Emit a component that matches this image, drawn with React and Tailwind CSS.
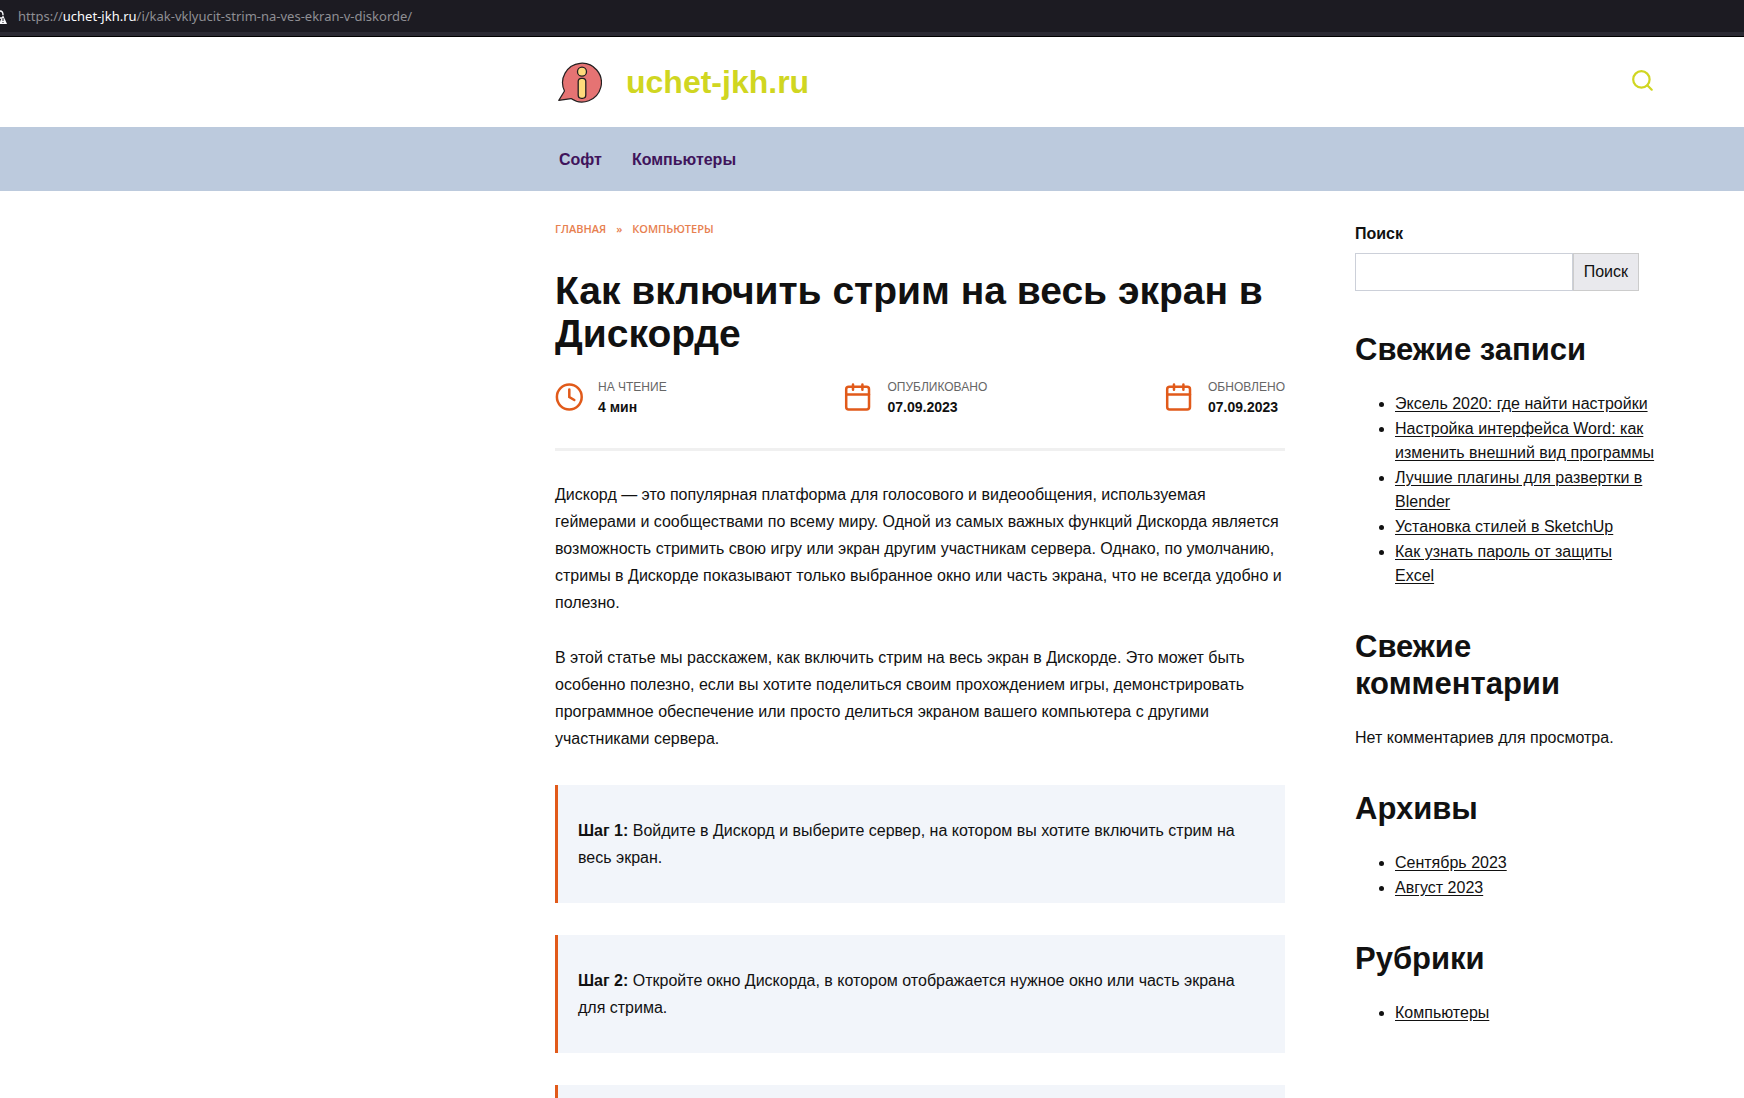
import { useState } from 'react';

const navLinks = ['Софт', 'Компьютеры'];

const recentPosts = [
  'Эксель 2020: где найти настройки',
  'Настройка интерфейса Word: как изменить внешний вид программы',
  'Лучшие плагины для развертки в Blender',
  'Установка стилей в SketchUp',
  'Как узнать пароль от защиты Excel',
];

const steps = [
  { title: 'Шаг 1:', text: 'Войдите в Дискорд и выберите сервер, на котором вы хотите включить стрим на весь экран.' },
  { title: 'Шаг 2:', text: 'Откройте окно Дискорда, в котором отображается нужное окно или часть экрана для стрима.' },
];

function Logo() {
  return (
    <svg viewBox="0 0 44 41" className="h-[41px] w-11" aria-hidden="true">
      <path
        d="M.8 38.4 6.5 29A19.4 19.4 0 1 1 13 36.6Z"
        fill="#e57373"
        stroke="#231f20"
        strokeWidth="1.2"
        strokeLinejoin="round"
      />
      <circle cx="24" cy="9.7" r="4.5" fill="#ffda7b" stroke="#231f20" strokeWidth="1.3" />
      <rect x="20.2" y="16.3" width="7.6" height="20" rx="3.2" fill="#ffda7b" stroke="#231f20" strokeWidth="1.3" />
    </svg>
  );
}

function ClockIcon() {
  return (
    <svg viewBox="0 0 28 28" className="size-7 shrink-0" fill="none" stroke="#e15a1a" strokeWidth="2.5" strokeLinecap="round" aria-hidden="true">
      <circle cx="14.3" cy="14" r="12.4" />
      <path d="M14.3 6.5V14l5 3" />
    </svg>
  );
}

function CalendarIcon() {
  return (
    <svg viewBox="0 0 28 28" className="size-7 shrink-0" fill="none" stroke="#e15a1a" strokeWidth="2.5" strokeLinecap="round" aria-hidden="true">
      <rect x="2.2" y="3.8" width="22.8" height="22.6" rx="2.5" />
      <path d="M2.2 11.5H25M9 1.6v5.2M18.4 1.6v5.2" />
    </svg>
  );
}

function MetaItem({ icon, label, value }) {
  return (
    <div className="flex items-center gap-[15px]">
      {icon}
      <div>
        <p className="text-xs leading-5 uppercase text-[#666]">{label}</p>
        <p className="text-sm leading-5 font-bold">{value}</p>
      </div>
    </div>
  );
}

function Widget({ title, children }) {
  return (
    <section className="mb-10">
      <h2 className="mb-6 text-[31px] leading-[37px] font-bold">{title}</h2>
      {children}
    </section>
  );
}

function LinkList({ items }) {
  return (
    <ul className="list-disc space-y-px pl-10 leading-6">
      {items.map(item => (
        <li key={item}>
          <a href="#" className="underline underline-offset-2">{item}</a>
        </li>
      ))}
    </ul>
  );
}

export default function App() {
  const [query, setQuery] = useState('');

  return (
    <div className="h-screen overflow-hidden bg-white font-['Liberation_Sans',Arial,sans-serif] text-base text-[#111]">
      {/* Address bar */}
      <div className="flex h-[37px] items-center border-b border-black bg-[#1c1b22] font-['Noto_Sans',sans-serif] text-[13px] text-[#8f8f94] shadow-[inset_0_-4px_0_#2b2a33]">
        <svg viewBox="0 0 8 16" className="mr-2.5 h-4 w-2" aria-hidden="true">
          <path d="M0 1c2 0 3 1 3 4M0 8h2" stroke="#fbfbfe" strokeWidth="1.4" fill="none" />
          <path d="M3 5 7 14H-1Z" fill="#fbfbfe" />
          <path d="M3 8v3M3 12v1" stroke="#1c1b22" strokeWidth="1" />
        </svg>
        <span className="pb-0.5">https://<span className="text-[#fbfbfe]">uchet-jkh.ru</span>/i/kak-vklyucit-strim-na-ves-ekran-v-diskorde/</span>
      </div>

      <header>
        <div className="mr-[89px] ml-auto flex h-[90px] max-w-[1100px] items-center justify-between pr-0.5 pl-[3px]">
          <a href="#" className="flex items-center gap-6">
            <Logo />
            <span className="text-[32px] leading-9 font-bold text-[#d0d621]">uchet-jkh.ru</span>
          </a>
          <button type="button" aria-label="Поиск по сайту" className="pb-1">
            <svg viewBox="0 0 21 21" className="size-[21px]" fill="none" stroke="#d0d621" strokeWidth="2.2" strokeLinecap="round" aria-hidden="true">
              <circle cx="9.4" cy="9.4" r="8.2" />
              <path d="m15.3 15.3 4.4 4.4" />
            </svg>
          </button>
        </div>
        <nav className="bg-[#bccadd]">
          <ul className="mr-[89px] ml-auto flex h-16 max-w-[1100px] items-center gap-[30px] pt-0.5 pl-1 font-bold text-[#3f145b]">
            {navLinks.map(link => (
              <li key={link}><a href="#">{link}</a></li>
            ))}
          </ul>
        </nav>
      </header>

      <div className="mr-[89px] ml-auto flex max-w-[1100px] gap-[70px] pt-[30px]">
        <main className="min-w-0 flex-1">
          <nav aria-label="Навигация" className="flex gap-2.5 font-['Open_Sans','Noto_Sans',sans-serif] text-[11px] leading-4 font-semibold text-[#e7804f] uppercase">
            <a href="#">Главная</a>
            <span>»</span>
            <a href="#">Компьютеры</a>
          </nav>

          <h1 className="mt-8 text-[39px] leading-[43px] font-bold">Как включить стрим на весь экран в Дискорде</h1>

          <div className="mt-[22px] flex justify-between border-b-3 border-[#f0f0f0] pb-[31px]">
            <MetaItem icon={<ClockIcon />} label="На чтение" value="4 мин" />
            <MetaItem icon={<CalendarIcon />} label="Опубликовано" value="07.09.2023" />
            <MetaItem icon={<CalendarIcon />} label="Обновлено" value="07.09.2023" />
          </div>

          <article className="pt-[30px] leading-[27px]">
            <p className="mb-7">
              Дискорд — это популярная платформа для голосового и видеообщения, используемая геймерами и сообществами по всему миру. Одной из самых важных функций Дискорда является возможность стримить свою игру или экран другим участникам сервера. Однако, по умолчанию, стримы в Дискорде показывают только выбранное окно или часть экрана, что не всегда удобно и полезно.
            </p>
            <p className="mb-[33px]">
              В этой статье мы расскажем, как включить стрим на весь экран в Дискорде. Это может быть особенно полезно, если вы хотите поделиться своим прохождением игры, демонстрировать программное обеспечение или просто делиться экраном вашего компьютера с другими участниками сервера.
            </p>
            {steps.map(step => (
              <blockquote key={step.title} className="mb-8 border-l-3 border-[#e15a1a] bg-[#f2f5fa] py-8 pr-8 pl-5">
                <strong>{step.title}</strong> {step.text}
              </blockquote>
            ))}
            <blockquote className="h-28 border-l-3 border-[#e15a1a] bg-[#f2f5fa]" />
          </article>
        </main>

        <aside className="w-[300px] shrink-0">
          <form className="mb-10 pt-px pr-4" onSubmit={e => e.preventDefault()}>
            <label htmlFor="search" className="mb-[7px] block leading-6 font-bold">Поиск</label>
            <div className="flex h-[38px]">
              <input
                id="search"
                type="search"
                value={query}
                onChange={e => setQuery(e.target.value)}
                className="min-w-0 flex-1 border border-[#ccd0d9] px-2 outline-none"
              />
              <button type="submit" className="border border-[#ccc] bg-[#e9e9ed] px-2.5">Поиск</button>
            </div>
          </form>

          <Widget title="Свежие записи">
            <LinkList items={recentPosts} />
          </Widget>
          <Widget title="Свежие комментарии">
            <p className="leading-6">Нет комментариев для просмотра.</p>
          </Widget>
          <Widget title="Архивы">
            <LinkList items={['Сентябрь 2023', 'Август 2023']} />
          </Widget>
          <Widget title="Рубрики">
            <LinkList items={['Компьютеры']} />
          </Widget>
        </aside>
      </div>
    </div>
  );
}
